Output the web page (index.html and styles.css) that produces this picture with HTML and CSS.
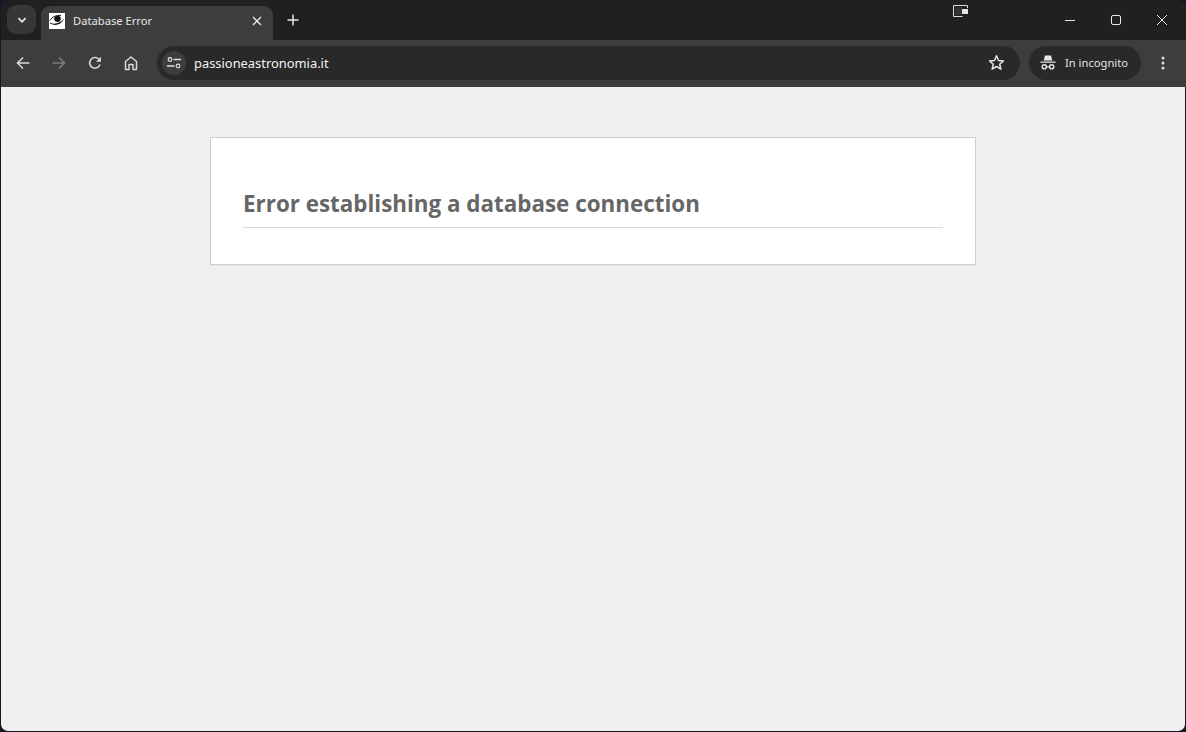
FILE: index.html
```html
<!DOCTYPE html>
<html lang="en">
<head>
<meta charset="utf-8">
<title>Database Error</title>
<link rel="stylesheet" href="styles.css">
</head>
<body>
<div class="window">
  <header class="tabstrip">
    <button class="tab-search" aria-label="Search tabs">
      <svg width="12" height="12" viewBox="0 0 12 12"><path d="M2.4 4.2 6 7.8l3.6-3.6" fill="none" stroke="#e8e8e8" stroke-width="1.8"/></svg>
    </button>
    <div class="tab">
      <svg class="favicon" width="16" height="16" viewBox="0 0 16 16"><rect width="16" height="16" fill="#fff"/><ellipse cx="8.500" cy="5.800" rx="3.300" ry="3.100" fill="#111"/><path d="M1 9.500C5 12 11 10.500 15.500 5.500 12 12 6 13.500 1 10.500Z" fill="#111"/><path d="M1 7.500C3 4 7 2 12 2.500" fill="none" stroke="#111" stroke-width="1"/></svg>
      <span class="tab-title">Database Error</span>
      <svg class="tab-close" width="10" height="10" viewBox="0 0 10 10"><path d="M1 1l8 8M9 1l-8 8" stroke="#e4e4e4" stroke-width="1.400"/></svg>
    </div>
    <svg class="new-tab" width="12" height="12" viewBox="0 0 12 12"><path d="M6 .5v11M.5 6h11" stroke="#e6e6e6" stroke-width="1.500"/></svg>
    <svg class="cast" width="16" height="13" viewBox="0 0 16 13"><path d="M14.500 3V.5H.5v11h9" fill="none" stroke="#ddd"/><rect x="2" y="2" width="7" height="8" fill="#333"/><rect x="9" y="4" width="6" height="5" fill="#e6e6e6"/></svg>
    <div class="win-controls">
      <svg width="46" height="12" viewBox="0 0 46 12"><path d="M18 6.500h10" stroke="#e8e8e8"/></svg>
      <svg width="46" height="12" viewBox="0 0 46 12"><rect x="18.500" y="1.500" width="9" height="9" rx="1.500" fill="none" stroke="#e8e8e8"/></svg>
      <svg width="46" height="12" viewBox="0 0 46 12"><path d="M18 1l10 10M28 1 18 11" stroke="#e8e8e8"/></svg>
    </div>
  </header>
  <nav class="toolbar">
    <div class="nav-icons">
      <svg width="16" height="16" viewBox="0 0 16 16"><path d="M14.500 8H2.500M8 2.500 2.500 8 8 13.500" fill="none" stroke="#d8d8d8" stroke-width="1.600"/></svg>
      <svg width="16" height="16" viewBox="0 0 16 16"><path d="M1.500 8h12M8 2.500 13.500 8 8 13.500" fill="none" stroke="#7b7b7b" stroke-width="1.600"/></svg>
      <svg width="16" height="16" viewBox="0 0 16 16"><path d="M13 9.500A5.300 5.300 0 1 1 11.800 4.200L13.500 6" fill="none" stroke="#d8d8d8" stroke-width="1.600"/><path d="M14 1.800v5h-5z" fill="#d8d8d8"/></svg>
      <svg width="16" height="16" viewBox="0 0 16 16"><path d="M2.500 14.500V6.500L8 2l5.500 4.500v8H10V9.500H6v5Z" fill="none" stroke="#d8d8d8" stroke-width="1.500" stroke-linejoin="round"/></svg>
    </div>
    <div class="omnibox">
      <span class="site-info">
        <svg width="14" height="12" viewBox="0 0 14 12"><circle cx="3" cy="2.500" r="1.800" fill="none" stroke="#e0e0e0" stroke-width="1.200"/><path d="M6.500 2.500H14M0 9h7.500" stroke="#e0e0e0" stroke-width="1.400"/><circle cx="11" cy="9" r="1.800" fill="none" stroke="#e0e0e0" stroke-width="1.200"/></svg>
      </span>
      <span class="url">passioneastronomia.it</span>
      <svg class="star" width="17" height="17" viewBox="0 0 17 17"><path d="M8.500 1.800l2 4.700 5 .4-3.800 3.300 1.200 5-4.400-2.700-4.400 2.700 1.200-5L1.500 6.900l5-.4Z" fill="none" stroke="#e4e4e4" stroke-width="1.500" stroke-linejoin="round"/></svg>
    </div>
    <div class="incognito">
      <svg width="16" height="15" viewBox="0 0 16 15"><path d="M5 .5h6l1.300 5H3.700ZM.5 6.500h15v1.300H.5Z" fill="#e8e8e8"/><circle cx="4.300" cy="11.800" r="2.100" fill="none" stroke="#e8e8e8" stroke-width="1.400"/><circle cx="11.700" cy="11.800" r="2.100" fill="none" stroke="#e8e8e8" stroke-width="1.400"/><path d="M6.300 11.800h3.400" stroke="#e8e8e8" stroke-width="1.200"/></svg>
      <span>In incognito</span>
    </div>
    <svg class="menu" width="4" height="14" viewBox="0 0 4 14"><circle cx="2" cy="2" r="1.500" fill="#ddd"/><circle cx="2" cy="7" r="1.500" fill="#ddd"/><circle cx="2" cy="12" r="1.500" fill="#ddd"/></svg>
  </nav>
  <main class="viewport">
    <section class="error-page">
      <h1>Error establishing a database connection</h1>
    </section>
  </main>
</div>
</body>
</html>
```

FILE: styles.css
```css
* { box-sizing: border-box; }
html, body { margin: 0; height: 100%; overflow: hidden; background: #16162a; }
body { font-family: "Open Sans", "Noto Sans", sans-serif; }
.window { height: 732px; display: flex; flex-direction: column; padding: 0 1px 1px; border-radius: 0 0 8px 8px; }
.tabstrip { position: relative; height: 40px; flex: none; display: flex; align-items: center; background: #1f2020; margin: 0 -1px 0 0; padding-left: 6px; border-radius: 8px 8px 0 0; }
.tab-search { width: 29px; height: 29px; margin-top: -1px; flex: none; display: flex; align-items: center; justify-content: center; padding: 0; border: 0; border-radius: 9px; background: #373737; }
.tab { width: 232px; height: 34px; margin: 6px 0 0 5px; flex: none; display: flex; align-items: center; padding: 0 11px 5px 8px; background: #3d3d3d; border-radius: 9px 9px 0 0; }
.favicon { flex: none; }
.tab-title { margin-left: 8px; flex: 1; font-family: "Noto Sans", sans-serif; font-size: 11.2px; color: #e6e6e6; }
.new-tab { margin-left: 14px; flex: none; }
.cast { position: absolute; left: 952px; top: 5px; }
.win-controls { margin-left: auto; display: flex; margin-right: 1px; }
.toolbar { height: 47px; flex: none; display: flex; align-items: center; background: #3d3d3d; padding: 0 21px 2px 14px; margin-right: -1px; }
.nav-icons { display: flex; gap: 20px; flex: none; }
.omnibox { width: 863px; height: 34px; margin-left: 18px; flex: none; display: flex; align-items: center; background: #292929; border-radius: 17px; padding: 0 15px 0 5px; }
.site-info { width: 24px; height: 24px; flex: none; display: flex; align-items: center; justify-content: center; border-radius: 50%; background: #3d3d3d; }
.url { margin-left: 8px; flex: 1; font-family: "Noto Sans", sans-serif; font-size: 12.9px; color: #f2f2f2; }
.star { flex: none; }
.incognito { width: 112px; height: 34px; margin-left: 9px; flex: none; display: flex; align-items: center; gap: 9px; padding-left: 11px; background: #292929; border-radius: 17px; font-family: "Noto Sans", sans-serif; font-size: 11.2px; color: #e4e4e4; }
.menu { margin-left: auto; flex: none; }
.viewport { flex: 1; background: #f0f0f0; padding-top: 50px; border-radius: 0 0 7px 7px; }
.error-page { width: 766px; height: 128px; margin-left: 209px; padding: 48px 32px 0; background: #fff; border: 1px solid #ccd0d4; box-shadow: 0 1px 1px rgba(0,0,0,.04); }
h1 { margin: 0; height: 42px; padding-left: 0; border-bottom: 1px solid #dadada; font-family: "Open Sans", sans-serif; font-size: 22.4px; font-weight: 700; line-height: 36px; color: #666; }
```
